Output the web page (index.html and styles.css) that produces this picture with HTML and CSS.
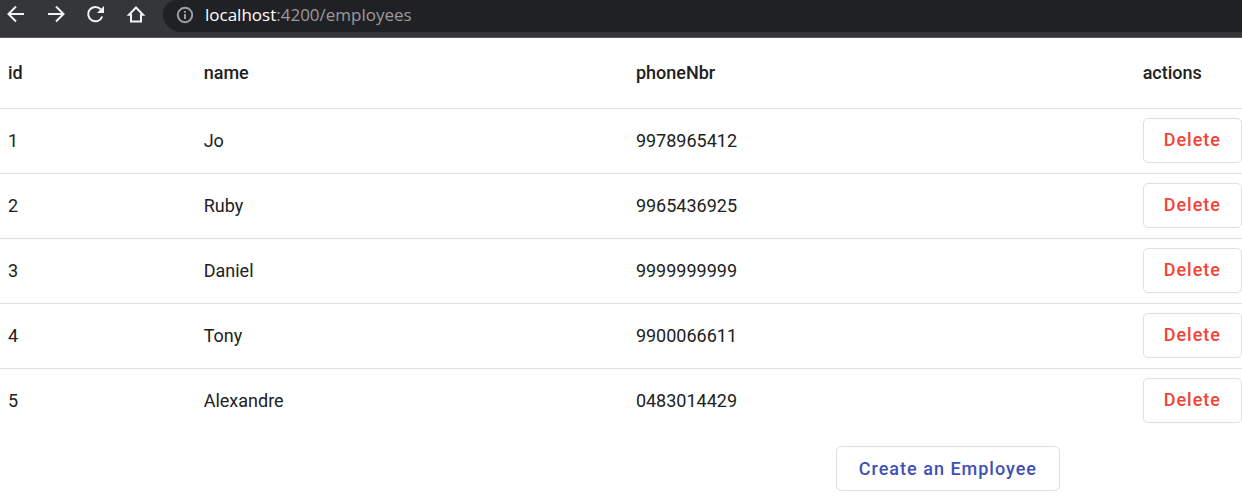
FILE: index.html
```
<!DOCTYPE html>
<html lang="en">
<head>
<meta charset="utf-8">
<meta name="viewport" content="width=device-width, initial-scale=1">
<title>Employees</title>
<link rel="stylesheet" href="styles.css">
</head>
<body>
<header class="toolbar">
  <nav class="toolbar-nav" aria-label="Browser">
    <button class="tool" type="button" aria-label="Back"><svg viewBox="0 0 20 20"><path d="M18 10H3M10 2.500L2.500 10l7.500 7.500"/></svg></button>
    <button class="tool" type="button" aria-label="Forward"><svg viewBox="0 0 20 20"><path d="M2 10h15M10 2.500l7.500 7.500-7.500 7.500"/></svg></button>
    <button class="tool" type="button" aria-label="Reload"><svg viewBox="0 0 20 20"><path d="M14.700 5.200A7.200 7.200 0 1 0 16.200 12.500"/><path class="solid" d="M18 2v7h-7z"/></svg></button>
    <button class="tool" type="button" aria-label="Home"><svg viewBox="0 0 20 20"><path d="M3 10.800h2v6.600h10v-6.600h2L10 3.500z"/></svg></button>
  </nav>
  <div class="address">
    <svg class="info" viewBox="0 0 18 18"><circle cx="9" cy="9" r="7.200"/><path d="M9 8v5M9 5v1.800"/></svg>
    <span class="url"><span class="host">localhost</span>:4200/employees</span>
  </div>
</header>
<main>
  <table class="employees">
    <thead>
      <tr><th class="col-id">id</th><th class="col-name">name</th><th class="col-phone">phoneNbr</th><th class="col-actions">actions</th></tr>
    </thead>
    <tbody>
      <tr><td>1</td><td>Jo</td><td>9978965412</td><td class="action"><button class="btn warn" type="button">Delete</button></td></tr>
      <tr><td>2</td><td>Ruby</td><td>9965436925</td><td class="action"><button class="btn warn" type="button">Delete</button></td></tr>
      <tr><td>3</td><td>Daniel</td><td>9999999999</td><td class="action"><button class="btn warn" type="button">Delete</button></td></tr>
      <tr><td>4</td><td>Tony</td><td>9900066611</td><td class="action"><button class="btn warn" type="button">Delete</button></td></tr>
      <tr><td>5</td><td>Alexandre</td><td>0483014429</td><td class="action"><button class="btn warn" type="button">Delete</button></td></tr>
    </tbody>
  </table>
  <div class="footer"><button class="btn primary" type="button">Create an Employee</button></div>
</main>
</body>
</html>
```
FILE: styles.css
```
* { box-sizing: border-box; }
body {
  margin: 0;
  background: #fff;
  color: #212121;
  font: 18px/24px Roboto, sans-serif;
}
.toolbar {
  display: flex;
  align-items: flex-start;
  background: #35363a;
  border-bottom: 1px solid #5c5d61;
  padding-bottom: 5px;
}
.toolbar-nav {
  display: flex;
  gap: 20px;
  padding: 4px 17px 0 6px;
}
.tool {
  width: 20px;
  height: 20px;
  padding: 0;
  border: 0;
  background: none;
}
.tool svg { display: block; width: 20px; height: 20px; fill: none; stroke: #f1f3f4; stroke-width: 2; }
.tool .solid { fill: #f1f3f4; stroke: none; }
.address {
  display: flex;
  flex: 1;
  align-items: center;
  gap: 11px;
  height: 32px;
  padding: 0 13px 2px;
  border-radius: 14px 0 0 18px;
  background: #202124;
}
.info { width: 18px; height: 18px; fill: none; stroke: #9aa0a6; stroke-width: 2; }
.url { color: #9a9b9d; font: 17px/24px "Open Sans", sans-serif; }
.host { color: #fff; }
.employees {
  width: 100%;
  table-layout: fixed;
  border-collapse: separate;
  border-spacing: 0;
}
.col-id { width: 16.4%; }
.col-name { width: 34.8%; }
.col-phone { width: 40.8%; }
th, td {
  padding: 0;
  border-bottom: 1px solid #e0e0e0;
  text-align: left;
}
th { height: 71px; font-weight: 500; }
td { height: 65px; }
th:first-child, td:first-child { padding-left: 8px; }
.action { padding-bottom: 2px; }
tbody tr:last-child td { border-bottom-color: transparent; }
.btn {
  display: block;
  height: 45px;
  padding: 0 18px;
  border: 1px solid #e0e0e0;
  border-radius: 5px;
  background: #fff;
  font: 500 18px/24px Roboto, sans-serif;
  letter-spacing: 1px;
  white-space: nowrap;
}
.action .btn { width: 100%; }
.warn { color: #f44336; }
.primary { color: #3f51b5; padding: 0 22px; }
.footer {
  display: flex;
  justify-content: flex-end;
  padding: 12px 182px 9px 0;
}
```
